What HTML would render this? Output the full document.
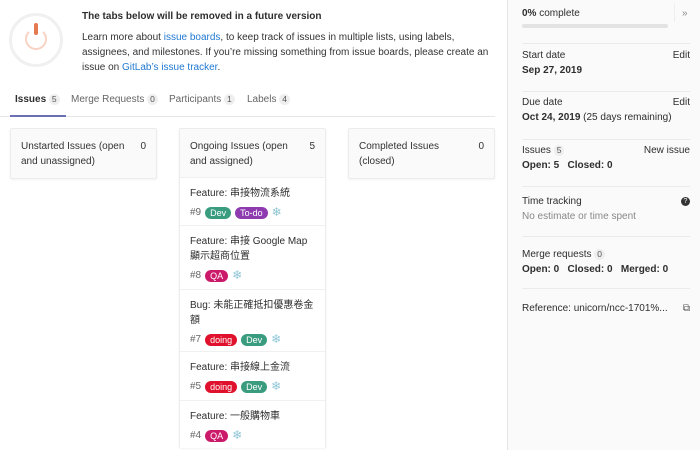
<!DOCTYPE html>
<html><head><meta charset="utf-8"><style>
*{box-sizing:border-box;margin:0;padding:0}
body{width:700px;height:450px;overflow:hidden;background:#fff;font-family:"Liberation Sans","Noto Sans CJK TC",sans-serif;font-size:10px;color:#2e2e2e;position:relative}
.a{position:absolute}
.link{color:#1f78d1}
.badge{display:inline-block;background:#eee;color:#555;border-radius:8px;padding:0 3px;font-size:8.5px;line-height:11px}
.list{position:absolute;top:128px;width:147px;border:1px solid #ececec;background:#fafafa;border-radius:2px;box-shadow:0 1px 2px rgba(0,0,0,.05)}
.lh{height:49px;padding:10px 10px;line-height:15px;display:flex;justify-content:space-between;color:#333}
.card{background:#fff;border-top:1px solid #f0f0f0;padding:8px 10px;line-height:15px;position:absolute;left:0;right:0}
.meta{margin-top:4px;color:#666;display:flex;align-items:center;gap:4px}
.lb{display:inline-block;color:#fff;border-radius:7px;padding:0 5px;font-size:9px;line-height:12px}
.sf{color:#8fc6d6;font-size:12px}
.sb{position:absolute;left:507px;top:0;width:193px;height:450px;background:#fafafa;border-left:1px solid #e5e5e5}
.sec{position:absolute;left:14px;right:10px;border-bottom:1px solid #ebebeb;line-height:15px}
b{font-weight:bold}
</style></head><body>
<div class="a" style="left:9px;top:13px;width:54px;height:54px;border-radius:50%;border:3px solid #f0f0f0;background:#fff"></div>
<div class="a" style="left:25px;top:28px;width:22px;height:22px;border-radius:50%;border:2.5px solid #f8d3c3;border-top-color:transparent"></div>
<div class="a" style="left:34px;top:23px;width:4px;height:12px;border-radius:2px;background:#e5794f"></div>
<div class="a" style="left:82px;top:11px;font-weight:bold;font-size:10px">The tabs below will be removed in a future version</div>
<div class="a" style="left:82px;top:30px;width:410px;line-height:15px;color:#333">Learn more about <span class="link">issue boards</span>, to keep track of issues in multiple lists, using labels, assignees, and milestones. If you’re missing something from issue boards, please create an issue on <span class="link">GitLab’s issue tracker</span>.</div>
<div class="a" style="left:0;top:116px;width:495px;border-bottom:1px solid #e5e5e5"></div>
<div class="a" style="left:10px;top:115px;width:56px;height:2px;background:#6b6fb3"></div>
<div class="a" style="left:15px;top:94px;color:#2e2e2e"><b style="font-weight:600">Issues</b> <span class="badge">5</span></div>
<div class="a" style="left:71px;top:94px;color:#666">Merge Requests <span class="badge">0</span></div>
<div class="a" style="left:169px;top:94px;color:#666">Participants <span class="badge">1</span></div>
<div class="a" style="left:247px;top:94px;color:#666">Labels <span class="badge">4</span></div>

<div class="list" style="left:10px"><div class="lh"><span>Unstarted Issues (open<br>and unassigned)</span><span>0</span></div></div>
<div class="list" style="left:348px"><div class="lh"><span>Completed Issues<br>(closed)</span><span>0</span></div></div>
<div class="list" style="left:179px;height:320px;background:#fafafa">
<div class="lh"><span>Ongoing Issues (open<br>and assigned)</span><span>5</span></div>
<div class="card" style="top:48px;height:49px">Feature: 串接物流系統<div class="meta">#9 <span class="lb" style="background:#3a9c7f">Dev</span><span class="lb" style="background:#8e3bb0">To-do</span><span class="sf">❄</span></div></div>
<div class="card" style="top:96px;height:64px">Feature: 串接 Google Map<br>顯示超商位置<div class="meta">#8 <span class="lb" style="background:#cc1a6b">QA</span><span class="sf">❄</span></div></div>
<div class="card" style="top:160px;height:62px">Bug: 未能正確抵扣優惠卷金<br>額<div class="meta">#7 <span class="lb" style="background:#e0112c">doing</span><span class="lb" style="background:#3a9c7f">Dev</span><span class="sf">❄</span></div></div>
<div class="card" style="top:222px;height:49px">Feature: 串接線上金流<div class="meta">#5 <span class="lb" style="background:#e0112c">doing</span><span class="lb" style="background:#3a9c7f">Dev</span><span class="sf">❄</span></div></div>
<div class="card" style="top:271px;height:48px">Feature: 一般購物車<div class="meta">#4 <span class="lb" style="background:#cc1a6b">QA</span><span class="sf">❄</span></div></div>
</div>

<div class="sb">
<div class="sec" style="top:6px;height:38px"><b>0%</b> complete<div style="width:146px;height:4px;background:#e3e3e3;border-radius:2px;margin-top:3px"></div></div>
<div class="a" style="left:174px;top:8px;color:#888">»</div>
<div class="a" style="left:166px;top:4px;height:18px;border-left:1px solid #eee"></div>
<div class="sec" style="top:45px;height:47px;padding-top:3px">Start date<span style="float:right">Edit</span><br><b>Sep 27, 2019</b></div>
<div class="sec" style="top:92px;height:48px;padding-top:3px">Due date<span style="float:right">Edit</span><br><b>Oct 24, 2019</b> (25 days remaining)</div>
<div class="sec" style="top:140px;height:47px;padding-top:3px">Issues <span class="badge">5</span><span style="float:right">New issue</span><br><b>Open: 5&nbsp;&nbsp;&nbsp;Closed: 0</b></div>
<div class="sec" style="top:187px;height:50px;padding-top:7px">Time tracking<span style="float:right;background:#333;color:#fff;border-radius:50%;width:9px;height:9px;font-size:7px;line-height:9px;text-align:center;margin-top:3px">?</span><br><span style="color:#888">No estimate or time spent</span></div>
<div class="sec" style="top:237px;height:52px;padding-top:10px">Merge requests <span class="badge">0</span><br><b>Open: 0&nbsp;&nbsp;&nbsp;Closed: 0&nbsp;&nbsp;&nbsp;Merged: 0</b></div>
<div class="sec" style="top:289px;height:40px;padding-top:12px;border:none">Reference: unicorn/ncc-1701%...<span style="float:right;color:#555">⧉</span></div>
</div>
</body></html>
